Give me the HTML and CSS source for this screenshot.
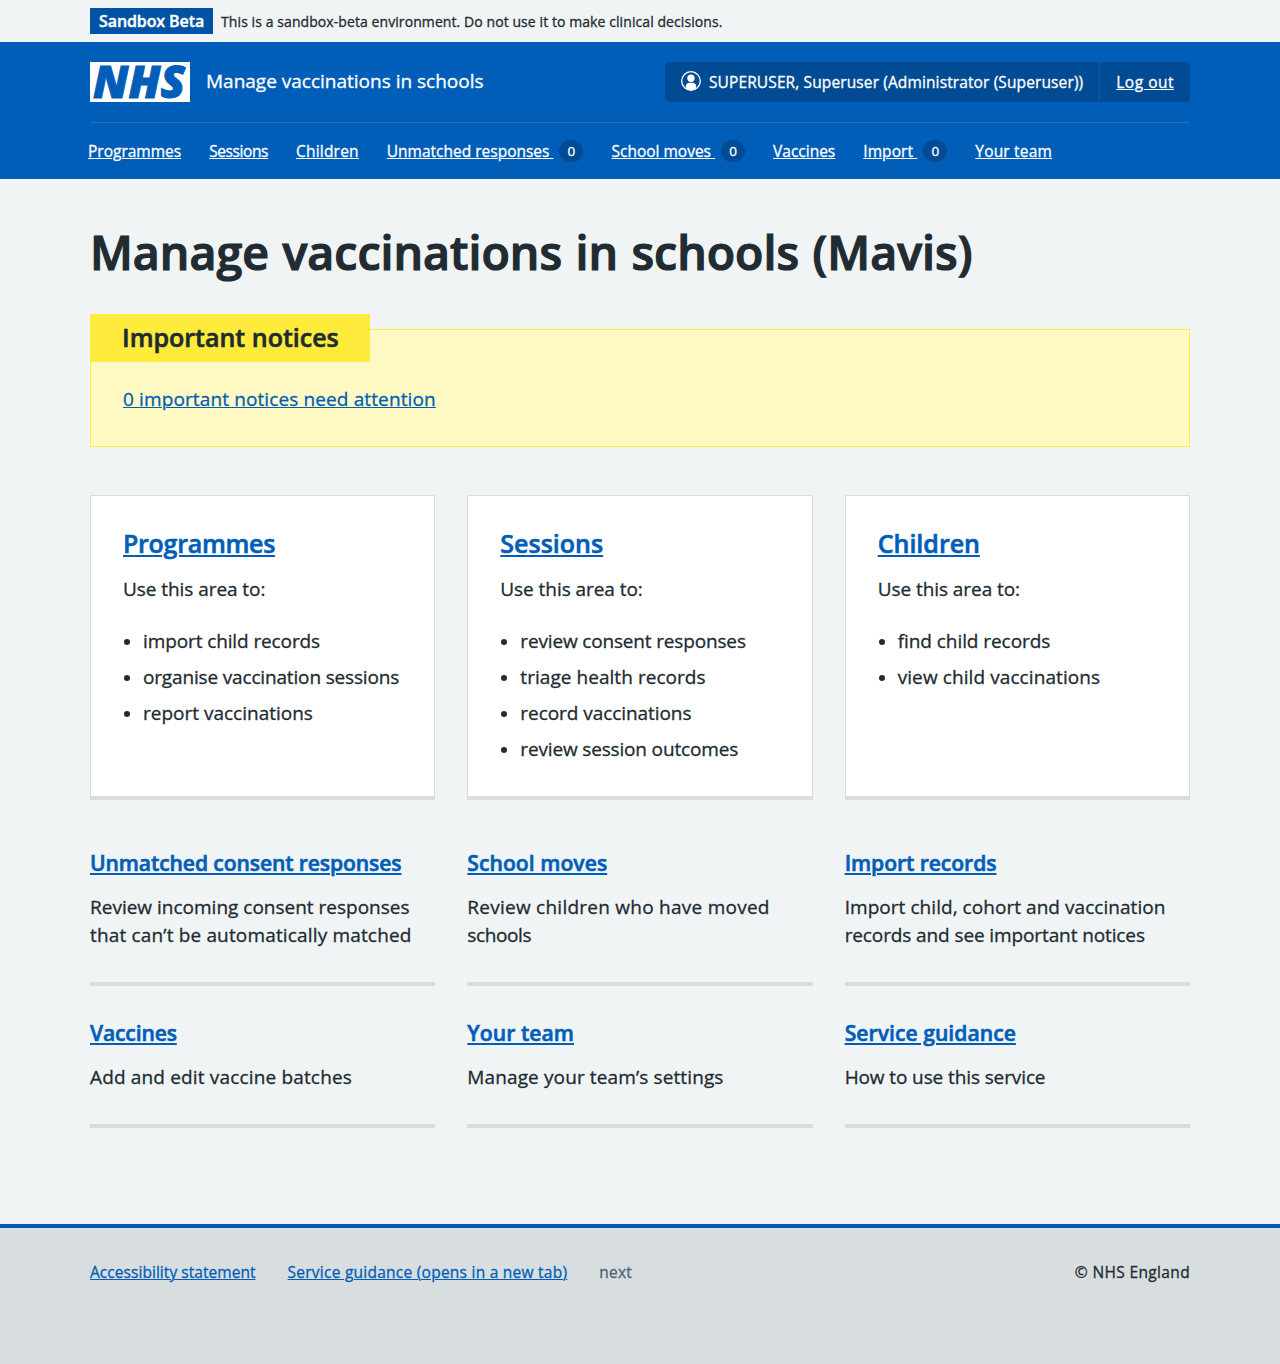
FILE: index.html
```html
<!DOCTYPE html>
<html lang="en">
<head>
<meta charset="utf-8">
<title>Manage vaccinations in schools (Mavis)</title>
<link rel="stylesheet" href="styles.css">
</head>
<body>
<div class="env"><div class="container env-inner"><strong class="env-tag">Sandbox Beta</strong><span class="env-text">This is a sandbox-beta environment. Do not use it to make clinical decisions.</span></div></div>
<header class="header">
  <div class="container header-top">
    <a class="brand" href="#">
      <svg class="logo" viewBox="0 0 100 40" role="img" aria-label="NHS"><rect width="100" height="40" fill="#fff"/><text x="3" y="36" textLength="92" lengthAdjust="spacingAndGlyphs" class="logo-text">NHS</text></svg>
      <span class="service">Manage vaccinations in schools</span>
    </a>
    <div class="account">
      <div class="account-item"><svg class="user" viewBox="0 0 20 20"><circle cx="10" cy="10" r="9.3" fill="none" stroke="#fff" stroke-width="1.3"/><circle cx="10" cy="7.2" r="3.7" fill="#fff"/><path d="M4.800 17v-1.600c0-2.300 1.700-3.600 3.600-3.600h3.200c1.900 0 3.600 1.300 3.600 3.600V17c-1.400 1.400-3.200 2.200-5.200 2.200S6.200 18.400 4.800 17z" fill="#fff"/></svg><span class="ls-12">SUPERUSER, Superuser (Administrator (Superuser))</span></div>
      <div class="account-item"><a href="#" class="ls-50">Log out</a></div>
    </div>
  </div>
  <nav class="container nav">
    <a href="#">Programmes</a>
    <a href="#" class="ls-n35">Sessions</a>
    <a href="#" class="ls-20">Children</a>
    <span class="nav-item"><a href="#">Unmatched responses </a><span class="count">0</span></span>
    <span class="nav-item"><a href="#">School moves </a><span class="count">0</span></span>
    <a href="#">Vaccines</a>
    <span class="nav-item"><a href="#" class="ls-10">Import </a><span class="count">0</span></span>
    <a href="#" class="ls-20">Your team</a>
  </nav>
</header>
<main class="container main">
  <h1>Manage vaccinations in schools (Mavis)</h1>
  <section class="notice">
    <h2 class="notice-label">Important notices</h2>
    <p><a href="#" class="ls-12">0 important notices need attention</a></p>
  </section>
  <div class="grid cards">
    <section class="card">
      <h2><a href="#" class="ls-n25">Programmes</a></h2>
      <p class="ls-n5">Use this area to:</p>
      <ul>
        <li class="ls-n10">import child records</li>
        <li class="ls-n15">organise vaccination sessions</li>
        <li>report vaccinations</li>
      </ul>
    </section>
    <section class="card">
      <h2><a href="#">Sessions</a></h2>
      <p class="ls-n5">Use this area to:</p>
      <ul>
        <li class="ls-n15">review consent responses</li>
        <li class="ls-5">triage health records</li>
        <li class="ls-n5">record vaccinations</li>
        <li class="ls-n15">review session outcomes</li>
      </ul>
    </section>
    <section class="card">
      <h2><a href="#">Children</a></h2>
      <p class="ls-n5">Use this area to:</p>
      <ul>
        <li class="ls-n5">find child records</li>
        <li class="ls-10">view child vaccinations</li>
      </ul>
    </section>
  </div>
  <div class="grid links">
    <section class="link-card">
      <h2><a href="#" class="ls-n10">Unmatched consent responses</a></h2>
      <p>Review incoming consent responses <span class="ls-15">that can’t be automatically matched</span></p>
    </section>
    <section class="link-card">
      <h2><a href="#" class="ls-5">School moves</a></h2>
      <p><span class="ls-25">Review children who have moved</span> <span class="ls-n35">schools</span></p>
    </section>
    <section class="link-card">
      <h2><a href="#" class="ls-n5">Import records</a></h2>
      <p><span class="ls-5">Import child, cohort and vaccination</span> <span class="ls-n10">records and see important notices</span></p>
    </section>
    <section class="link-card">
      <h2><a href="#" class="ls-n15">Vaccines</a></h2>
      <p class="ls-15">Add and edit vaccine batches</p>
    </section>
    <section class="link-card">
      <h2><a href="#" class="ls-5">Your team</a></h2>
      <p class="ls-12">Manage your team’s settings</p>
    </section>
    <section class="link-card">
      <h2><a href="#" class="ls-5">Service guidance</a></h2>
      <p class="ls-n10">How to use this service</p>
    </section>
  </div>
</main>
<footer class="footer">
  <div class="container footer-inner">
    <a href="#" class="ls-5">Accessibility statement</a>
    <a href="#" class="ls-25">Service guidance (opens in a new tab)</a>
    <span class="muted ls-25">next</span>
    <span class="copy ls-35">© NHS England</span>
  </div>
</footer>
</body>
</html>
```
FILE: styles.css
```css
* { box-sizing: border-box; }
body { margin: 0; background: #f0f4f5; color: #212b32; font: 19px/28px "Open Sans", "Noto Sans", sans-serif; -webkit-text-stroke: 0.3px; }
h1, h2, p, ul { margin: 0; }
a { color: #005eb8; text-underline-offset: 1px; text-decoration-thickness: 1px; }
.container { width: 1100px; margin: 0 auto; }

/* Environment banner */
.env { height: 42px; padding-top: 8px; }
.env-inner { display: flex; gap: 8px; align-items: center; height: 26px; }
.env-tag { background: #0052a3; color: #fff; font-size: 16px; font-weight: 600; letter-spacing: -0.1px; line-height: 26px; padding: 0 9px; -webkit-text-stroke: 0.4px; }
.env-text { font-size: 14px; letter-spacing: 0.08px; padding-top: 2px; }

/* Header */
.header { background: #005eb8; height: 137px; color: #fff; font-size: 15.5px; }
.header a { color: #fff; }
.header-top { display: flex; justify-content: space-between; height: 81px; padding-top: 20px; border-bottom: 1px solid #2672c0; }
.brand { display: flex; height: 40px; gap: 16px; align-items: center; text-decoration: none; }
.logo { width: 100px; height: 40px; flex: none; }
.logo-text { font: italic 800 45px "Open Sans", sans-serif; fill: #005eb8; stroke: #005eb8; stroke-width: 1px; -webkit-text-stroke: 1px #005eb8; }
.service { font-size: 19px; padding-bottom: 2px; white-space: nowrap; }
.account { display: flex; height: 40px; background: #004b93; border-radius: 4px; }
.account-item { display: flex; align-items: center; gap: 8px; padding: 0 16px; }
.account-item + .account-item { border-left: 1px solid #005eb8; }
.user { width: 20px; height: 20px; margin-top: -2px; }
.nav { display: flex; gap: 28px; align-items: center; height: 56px; }
.nav > :first-child { margin-left: -2px; }
.nav a { white-space: pre; }
.nav-item { display: flex; gap: 6px; align-items: center; }
.count { width: 24px; height: 22px; border-radius: 12px; background: #004b93; font-size: 13.5px; line-height: 23px; text-align: center; }

/* Page content */
.main { height: 1045px; padding-top: 46px; }
h1 { font-size: 46.5px; font-weight: 600; letter-spacing: 0.02px; word-spacing: 1.3px; line-height: 54px; -webkit-text-stroke: 1.2px; }
h2 { font-weight: 600; -webkit-text-stroke: 0.6px; }
.notice { margin-top: 50px; height: 118px; padding: 0 32px; border: 1px solid #ffeb3b; background: #fff9c4; }
.notice-label { width: 280px; margin: -16px 0 23px -33px; padding: 7px 32px 9px; background: #ffeb3b; font-size: 25px; line-height: 32px; white-space: nowrap; }
.grid { display: grid; grid-template-columns: repeat(3, 1fr); column-gap: 32px; }
.grid h2 a { text-decoration-thickness: 2px; text-underline-offset: 2px; }
.cards { margin-top: 48px; }
.card { background: #fff; border: 1px solid #d8dde0; border-bottom-width: 4px; padding: 31px 32px 33px; }
.card h2 { font-size: 25px; line-height: 32px; margin-bottom: 16px; }
.card ul { margin-top: 24px; padding-left: 20px; list-style: none; }
.card li { white-space: nowrap; }
.card li::before { content: ""; display: inline-block; width: 6px; height: 6px; margin: 0 13px 0 -19px; border-radius: 50%; background: #212b32; vertical-align: 3px; }
.card li + li { margin-top: 8px; }
.links { margin-top: 48px; row-gap: 32px; }
.link-card { border-bottom: 4px solid #d8dde0; padding-bottom: 33px; }
.link-card h2 { font-size: 21.1px; line-height: 29px; margin-bottom: 16px; }

/* Footer */
.footer { height: 140px; border-top: 4px solid #005eb8; background: #d8dde0; padding-top: 30px; font-size: 15.5px; }
.footer-inner { display: flex; gap: 32px; }
.muted { color: #4c6272; }
.copy { margin-left: auto; }

/* Letter spacing */
.ls-n35 { letter-spacing: -0.4px; }
.ls-n25 { letter-spacing: -0.28px; }
.ls-n15 { letter-spacing: -0.16px; }
.ls-n10 { letter-spacing: -0.11px; }
.ls-n5 { letter-spacing: -0.06px; }
.ls-5 { letter-spacing: 0.05px; }
.ls-10 { letter-spacing: 0.09px; }
.ls-12 { letter-spacing: 0.12px; }
.ls-15 { letter-spacing: 0.16px; }
.ls-20 { letter-spacing: 0.2px; }
.ls-25 { letter-spacing: 0.25px; }
.ls-35 { letter-spacing: 0.35px; }
.ls-50 { letter-spacing: 0.5px; }
```
